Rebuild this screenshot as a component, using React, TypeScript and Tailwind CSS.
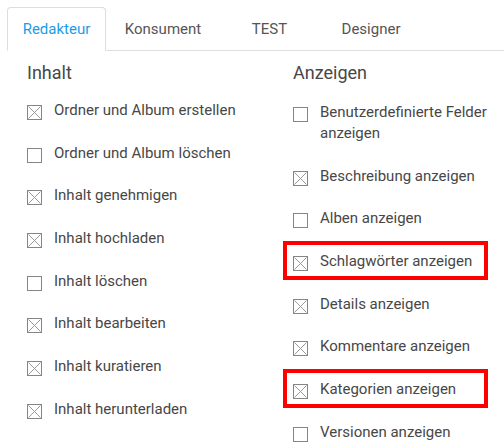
const tabs = [
  { label: 'Redakteur', width: 'w-[99px]', active: true },
  { label: 'Konsument', width: 'w-[114px]' },
  { label: 'TEST', width: 'w-[99px]' },
  { label: 'Designer', width: 'w-[104px]' },
]

type Perm = { label: string; checked: boolean; marked?: boolean }

const inhalt: Perm[] = [
  { label: 'Ordner und Album erstellen', checked: true },
  { label: 'Ordner und Album löschen', checked: false },
  { label: 'Inhalt genehmigen', checked: true },
  { label: 'Inhalt hochladen', checked: true },
  { label: 'Inhalt löschen', checked: false },
  { label: 'Inhalt bearbeiten', checked: true },
  { label: 'Inhalt kuratieren', checked: true },
  { label: 'Inhalt herunterladen', checked: true },
]

const anzeigen: Perm[] = [
  { label: 'Benutzerdefinierte Felder anzeigen', checked: false },
  { label: 'Beschreibung anzeigen', checked: true },
  { label: 'Alben anzeigen', checked: false },
  { label: 'Schlagwörter anzeigen', checked: true, marked: true },
  { label: 'Details anzeigen', checked: true },
  { label: 'Kommentare anzeigen', checked: true },
  { label: 'Kategorien anzeigen', checked: true, marked: true },
  { label: 'Versionen anzeigen', checked: false },
]

function Box({ checked }: { checked: boolean }) {
  return (
    <span className="mt-[5px] flex h-[15px] w-[15px] shrink-0 items-center justify-center border border-[#858585] bg-white">
      {checked && (
        <svg viewBox="0 0 13 13" className="h-[13px] w-[13px]">
          <path d="M0.5 0.5 L12.5 12.5 M12.5 0.5 L0.5 12.5" stroke="#9a9a9a" strokeWidth="1" />
        </svg>
      )}
    </span>
  )
}

function Row({ item }: { item: Perm }) {
  return (
    <li className="relative mb-[21.67px] flex gap-3">
      <Box checked={item.checked} />
      <span className="text-[15px] leading-[21px] text-[#474747]">{item.label}</span>
      {item.marked && (
        <span className="pointer-events-none absolute -top-[9.5px] -bottom-[8.5px] -left-[10px] right-4 border-4 border-[#ff0000]" />
      )}
    </li>
  )
}

function Column({ title, items, listClass }: { title: string; items: Perm[]; listClass: string }) {
  return (
    <div>
      <h3 className="mt-[10px] mb-[15px] text-[18px] leading-[24px] font-normal text-[#474747]">{title}</h3>
      <ul className={listClass}>
        {items.map((item) => (
          <Row key={item.label} item={item} />
        ))}
      </ul>
    </div>
  )
}

export default function App() {
  return (
    <div className="h-[443px] w-[504px] overflow-hidden bg-white font-['Roboto',sans-serif]">
      <div className="pt-[7px] pl-[7px]">
        <nav className="flex border-b border-[#dddddd]">
          {tabs.map((t) => (
            <button
              key={t.label}
              className={
                t.active
                  ? `${t.width} -mb-px h-[44px] rounded-t-[4px] border border-b-white border-[#dddddd] bg-white text-[15px] text-[#1a9de9]`
                  : `${t.width} -mb-px h-[44px] border border-transparent text-[15px] text-[#555555]`
              }
            >
              {t.label}
            </button>
          ))}
        </nav>
      </div>
      <div className="grid grid-cols-[266px_1fr] pl-[27px]">
        <Column title="Inhalt" items={inhalt} listClass="" />
        <Column title="Anzeigen" items={anzeigen} listClass="pt-[2px]" />
      </div>
    </div>
  )
}
